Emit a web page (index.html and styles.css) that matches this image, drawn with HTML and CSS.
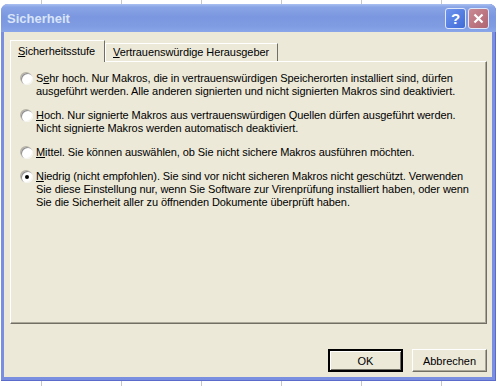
FILE: index.html
```html
<!DOCTYPE html>
<html lang="de">
<head>
    <meta charset="UTF-8">
    <meta name="viewport" content="width=device-width, initial-scale=1.0">
    <title>Sicherheit</title>
    <link rel="stylesheet" href="styles.css">
</head>
<body>

    <div class="window">
        <div class="titlebar">
            <span class="title">Sicherheit</span>
            <div class="caption-buttons">
                <span class="cap-btn help">?</span>
                <span class="cap-btn close">
                    <svg width="11" height="11" viewBox="0 0 11 11">
                        <path d="M1.5 1.5 L9.5 9.5 M9.5 1.5 L1.5 9.5" stroke="#fff" stroke-width="2.2" fill="none"/>
                    </svg>
                </span>
            </div>
        </div>

        <div class="client">
            <div class="tabs">
                <div class="tab active"><u>S</u>icherheitsstufe</div>
                <div class="tab"><u>V</u>ertrauenswürdige Herausgeber</div>
            </div>

            <div class="panel">
                <label class="option">
                    <span class="radio"></span>
                    <span class="text">S<u>e</u>hr hoch. Nur Makros, die in vertrauenswürdigen Speicherorten installiert sind, dürfen<br>ausgeführt werden. Alle anderen signierten und nicht signierten Makros sind deaktiviert.</span>
                </label>
                <label class="option">
                    <span class="radio"></span>
                    <span class="text"><u>H</u>och. Nur signierte Makros aus vertrauenswürdigen Quellen dürfen ausgeführt werden.<br>Nicht signierte Makros werden automatisch deaktiviert.</span>
                </label>
                <label class="option">
                    <span class="radio"></span>
                    <span class="text"><u>M</u>ittel. Sie können auswählen, ob Sie nicht sichere Makros ausführen möchten.</span>
                </label>
                <label class="option">
                    <span class="radio checked"></span>
                    <span class="text"><u>N</u>iedrig (nicht empfohlen). Sie sind vor nicht sicheren Makros nicht geschützt. Verwenden<br>Sie diese Einstellung nur, wenn Sie Software zur Virenprüfung installiert haben, oder wenn<br>Sie die Sicherheit aller zu öffnenden Dokumente überprüft haben.</span>
                </label>
            </div>

            <div class="actions">
                <button class="btn default">OK</button>
                <button class="btn">Abbrechen</button>
            </div>
        </div>
    </div>

</body>
</html>
```

FILE: styles.css
```css
body {
    margin: 0;
    background-color: #ffffff;
    background-image: repeating-linear-gradient(90deg, transparent 0, transparent 41px, #c8c8c8 41px, #c8c8c8 42px, transparent 42px, transparent 80px);
    font-family: "Liberation Sans", Arial, sans-serif;
    font-size: 11px;
    letter-spacing: -0.08px;
    color: #000;
    height: 386px;
    overflow: hidden;
}
.window {
    width: 495px;
    height: 377px;
    margin: 4px 0 0 1px;
    padding: 0 4px 4px 3px;
    box-sizing: border-box;
    background-color: #7b8fe0;
    border-radius: 7px 7px 0 0;
    box-shadow: inset 0 -1px 0 #5a6bcc, inset -1px 0 0 #5a6bcc;
    display: flex;
    flex-direction: column;
}
.titlebar {
    height: 28px;
    margin: 0 -4px 0 -3px;
    padding: 0 7px 0 6px;
    border-radius: 7px 7px 0 0;
    background: linear-gradient(#a9c0f0 0, #8aa5e6 3px, #7b97df 45%, #7f9be2 80%, #8ba7ea 100%);
    display: flex;
    align-items: center;
    justify-content: space-between;
}
.title {
    font-weight: bold;
    font-size: 13px;
    letter-spacing: 0;
    color: #d8e4f8;
    padding-top: 1px;
}
.caption-buttons {
    display: flex;
    gap: 2px;
    padding-top: 1px;
}
.cap-btn {
    width: 21px;
    height: 21px;
    box-sizing: border-box;
    border: 1px solid #dfe7fa;
    border-radius: 3px;
    display: flex;
    align-items: center;
    justify-content: center;
    color: #fff;
}
.cap-btn.help {
    background: linear-gradient(135deg, #6f95ee, #3f6ad8);
    font-weight: bold;
    font-size: 15px;
}
.cap-btn.close {
    background: linear-gradient(135deg, #c98a94, #b06472);
}
.client {
    flex: 1;
    background-color: #ece9d8;
    padding: 8px 5px 0 6px;
}
.tabs {
    display: flex;
    height: 21px;
    align-items: flex-end;
    position: relative;
    z-index: 1;
}
.tab {
    height: 18px;
    box-sizing: border-box;
    padding: 2px 8px 0 7px;
    border: 1px solid #ffffff;
    border-right-color: #716f64;
    border-bottom: none;
    background-color: #ece9d8;
    white-space: nowrap;
    line-height: 13px;
}
.tab.active {
    height: 22px;
    margin-bottom: -1px;
    padding: 4px 9px 0 7px;
}
.panel {
    height: 263px;
    box-sizing: border-box;
    border: 1px solid #ffffff;
    border-right-color: #716f64;
    border-bottom-color: #716f64;
    box-shadow: inset -1px -1px 0 #aca899;
    padding: 10px 0 0 10px;
    display: flex;
    flex-direction: column;
    gap: 11px;
}
.option {
    display: flex;
    align-items: flex-start;
    gap: 3px;
    line-height: 13px;
    white-space: nowrap;
}
.radio {
    width: 12px;
    height: 12px;
    margin-top: 1px;
    border-radius: 50%;
    background-color: #ffffff;
    box-shadow: inset 1px 1px 0 #8f8f8f, inset -1px -1px 0 #f4f3ee, -1px -1px 0 #b8b4a6;
    display: flex;
    align-items: center;
    justify-content: center;
    flex-shrink: 0;
}
.radio.checked::after {
    content: "";
    width: 4px;
    height: 4px;
    border-radius: 50%;
    background-color: #000;
}
.actions {
    display: flex;
    justify-content: flex-end;
    gap: 9px;
    margin-top: 25px;
}
.btn {
    width: 75px;
    height: 23px;
    font-family: inherit;
    font-size: 11px;
    color: #000;
    background-color: #ece9d8;
    border: 1px solid #ffffff;
    border-right-color: #716f64;
    border-bottom-color: #716f64;
    box-shadow: inset -1px -1px 0 #aca899;
    padding: 0;
}
.btn.default {
    border: 2px solid #000;
    box-shadow: inset 1px 1px 0 #fff, inset -1px -1px 0 #716f64;
}
```
